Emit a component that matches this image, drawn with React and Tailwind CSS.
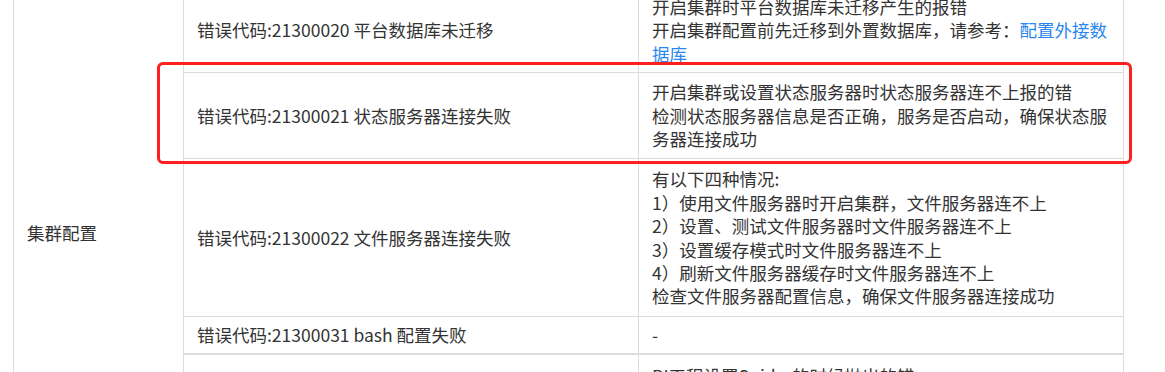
import React from 'react';

const rows = [
  {
    code: '错误代码:21300020 平台数据库未迁移',
    h: 'h-[85px]',
    desc: [
      '开启集群时平台数据库未迁移产生的报错',
      <>
        开启集群配置前先迁移到外置数据库，请参考：
        <span className="text-[#2a87f0]">配置外接数据库</span>
      </>,
    ],
  },
  {
    code: '错误代码:21300021 状态服务器连接失败',
    h: 'h-[86px]',
    desc: [
      '开启集群或设置状态服务器时状态服务器连不上报的错',
      '检测状态服务器信息是否正确，服务是否启动，确保状态服务器连接成功',
    ],
  },
  {
    code: '错误代码:21300022 文件服务器连接失败',
    h: 'h-[158px]',
    desc: [
      '有以下四种情况:',
      '1）使用文件服务器时开启集群，文件服务器连不上',
      '2）设置、测试文件服务器时文件服务器连不上',
      '3）设置缓存模式时文件服务器连不上',
      '4）刷新文件服务器缓存时文件服务器连不上',
      '检查文件服务器配置信息，确保文件服务器连接成功',
    ],
  },
  {
    code: '错误代码:21300031 bash 配置失败',
    h: 'h-[38px]',
    thick: true,
    desc: ['-'],
  },
  {
    code: '',
    h: 'h-[80px]',
    top: true,
    desc: ['BI工程设置Spider的时候抛出的错'],
  },
];

export default function App() {
  return (
    <div
      className="relative h-[372px] w-[1165px] overflow-hidden bg-white text-[17.5px] leading-[23.4px] text-[#333]"
      style={{ fontFamily: '"Noto Sans CJK SC", "Noto Sans", sans-serif' }}
    >
      <div className="-mt-[12px] ml-[13px] flex w-[1111px] border-x border-[#dcdcdc]">
        {/* rowspan column */}
        <div className="w-[170px] shrink-0 border-r border-[#dcdcdc] pl-[13px] pt-[233px]">
          集群配置
        </div>

        <div className="flex flex-1 flex-col">
          {rows.map((r, i) => (
            <div
              key={i}
              className={`flex ${r.h} ${r.thick ? 'border-b-2' : 'border-b'} border-[#dcdcdc]`}
            >
              <div className="flex w-[455px] shrink-0 items-center border-r border-[#dcdcdc] pl-[13px]">
                {r.code}
              </div>
              <div
                className={`flex flex-1 flex-col pl-[13px] pr-[10px] ${
                  r.top ? 'justify-start pt-[9px]' : 'justify-center'
                }`}
              >
                {r.desc.map((d, j) => (
                  <div key={j}>{d}</div>
                ))}
              </div>
            </div>
          ))}
        </div>
      </div>

      {/* highlight box */}
      <div className="absolute left-[157px] top-[62px] h-[102px] w-[975px] rounded-[6px] border-[3.5px] border-[#ff1f1f]" />
    </div>
  );
}
